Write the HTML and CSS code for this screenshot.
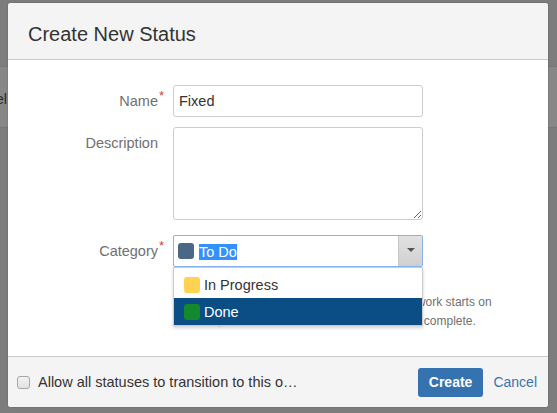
FILE: index.html
```html
<!DOCTYPE html>
<html lang="en">
<head>
<meta charset="utf-8">
<title>Create New Status</title>
<link rel="stylesheet" href="styles.css">
</head>
<body>
<div class="under"><span class="under-text">Label</span></div>
<div class="dialog">
  <header class="dlg-head"><h2 class="dlg-title">Create New Status</h2></header>
  <div class="dlg-body">
    <div class="row">
      <label class="lbl">Name<span class="req">*</span></label>
      <div class="field"><input class="text" type="text" value="Fixed"></div>
    </div>
    <div class="row row-desc">
      <label class="lbl">Description</label>
      <div class="field"><textarea class="textarea"></textarea></div>
    </div>
    <div class="row">
      <label class="lbl">Category<span class="req">*</span></label>
      <div class="field">
        <div class="select">
          <span class="swatch todo"></span>
          <span class="sel-text">To Do</span>
          <span class="arrow"><span class="tri"></span></span>
          <ul class="menu">
            <li class="opt"><span class="swatch prog"></span><span>In Progress</span></li>
            <li class="opt active"><span class="swatch done"></span><span>Done</span></li>
          </ul>
        </div>
        <div class="help">
          <div class="help-line">Use To Do for open issues, In Progress when work starts on</div>
          <div class="help-line">an issue, and use Done when all of the work is complete.</div>
        </div>
      </div>
    </div>
  </div>
  <footer class="dlg-foot">
    <label class="check"><input class="cb" type="checkbox"><span class="check-text">Allow all statuses to transition to this one</span></label>
    <div class="actions">
      <button class="btn" type="button">Create</button>
      <a class="cancel" href="#">Cancel</a>
    </div>
  </footer>
</div>
</body>
</html>
```

FILE: styles.css
```css
html, body {
  margin: 0;
  padding: 0;
}
body {
  background: #7d7d7d;
  font-family: "Liberation Sans", Arial, sans-serif;
  width: 557px;
  height: 413px;
  overflow: hidden;
  position: relative;
}
.under {
  position: absolute;
  top: 66px;
  left: 0;
  width: 557px;
  height: 62px;
  background: #878787;
  border-top: 1px solid #767676;
  border-bottom: 1px solid #767676;
  box-sizing: border-box;
}
.under-text {
  position: absolute;
  right: 550px;
  top: 24px;
  font-size: 14.5px;
  color: #2a2a2a;
}
.dialog {
  position: relative;
  z-index: 1;
  margin: 3px 0 0 8px;
  width: 540px;
  height: 404px;
  background: #fff;
  border-radius: 3px;
  display: flex;
  flex-direction: column;
  box-shadow: 0 0 2px rgba(0,0,0,0.25);
}
.dlg-head {
  background: #f4f4f4;
  border-bottom: 1px solid #cccccc;
  padding: 16px 20px 10px;
  border-radius: 3px 3px 0 0;
}
.dlg-title {
  margin: 0;
  font-size: 20px;
  font-weight: normal;
  line-height: 30px;
  color: #333;
}
.dlg-body {
  flex: 1;
  padding-top: 25px;
}
.row {
  display: grid;
  grid-template-columns: 150px 250px;
  column-gap: 15px;
  margin-bottom: 9px;
}
.row-desc {
  margin-bottom: 15px;
}
.lbl {
  text-align: right;
  line-height: 32px;
  font-size: 14.5px;
  color: #707070;
}
.req {
  display: inline-block;
  width: 7px;
  margin-right: -7px;
  text-align: left;
  color: #d04437;
  font-size: 13px;
  position: relative;
  top: -6px;
  left: 1px;
}
.field {
  position: relative;
}
.text {
  box-sizing: border-box;
  width: 250px;
  height: 32px;
  border: 1px solid #cccccc;
  border-radius: 3px;
  padding: 0 5px;
  margin: 0;
  font-family: inherit;
  font-size: 14.5px;
  color: #333;
  display: block;
}
.textarea {
  box-sizing: border-box;
  width: 250px;
  height: 93px;
  border: 1px solid #cccccc;
  border-radius: 3px;
  margin: 0;
  padding: 4px 5px;
  display: block;
  font-family: inherit;
  font-size: 14.5px;
}
.select {
  position: relative;
  box-sizing: border-box;
  width: 250px;
  height: 32px;
  border: 1px solid #88b2ef;
  border-radius: 2px;
  display: flex;
  align-items: center;
  padding-left: 4px;
  background: #fff;
}
.swatch {
  display: inline-block;
  width: 16px;
  height: 16px;
  border-radius: 3px;
  flex: none;
}
.todo { background: #4a6785; }
.prog { background: #ffd351; }
.done { background: #14892c; }
.sel-text {
  margin-left: 5px;
  background: #3390ff;
  color: #fff;
  font-size: 14.5px;
  line-height: 16px;
  margin-top: 1px;
}
.arrow {
  margin-left: auto;
  width: 23px;
  height: 30px;
  border-left: 1px solid #c6c6c6;
  background: linear-gradient(#e2e2e2, #d0d0d0);
  display: flex;
  align-items: center;
  justify-content: center;
}
.tri {
  width: 0;
  height: 0;
  border-left: 4px solid transparent;
  border-right: 4px solid transparent;
  border-top: 4px solid #555;
  margin-top: -3px;
}
.menu {
  position: absolute;
  top: calc(100% + 1px);
  left: -1px;
  right: -1px;
  margin: 0;
  padding: 3px 0 0;
  list-style: none;
  background: #fff;
  border: 1px solid #cccccc;
  box-shadow: 0 2px 3px rgba(0,0,0,0.18);
  z-index: 2;
}
.opt {
  height: 27px;
  display: flex;
  align-items: center;
  gap: 4px;
  padding-left: 10px;
  font-size: 14.5px;
  color: #333;
}
.opt.active {
  background: #0b4e86;
  color: #fff;
}
.help {
  margin-top: 26px;
  font-size: 12px;
  line-height: 19px;
  color: #707070;
  white-space: nowrap;
}
.dlg-foot {
  box-sizing: border-box;
  height: 51px;
  border-top: 1px solid #cccccc;
  background: #f4f4f4;
  display: flex;
  align-items: center;
  padding: 0 11px 0 9px;
  border-radius: 0 0 3px 3px;
}
.check {
  display: flex;
  align-items: center;
  gap: 8px;
}
.cb {
  appearance: none;
  -webkit-appearance: none;
  width: 13px;
  height: 13px;
  margin: 0;
  border: 1px solid #a6a6a6;
  border-radius: 3px;
  background: linear-gradient(#f2f2f2, #e2e2e2);
  box-sizing: border-box;
  flex: none;
}
.check-text {
  max-width: 261px;
  overflow: hidden;
  text-overflow: ellipsis;
  white-space: nowrap;
  font-size: 14.5px;
  color: #333;
}
.actions {
  margin-left: auto;
  display: flex;
  align-items: center;
  gap: 10px;
}
.btn {
  height: 29px;
  padding: 0 11px;
  border: none;
  border-radius: 3px;
  background: #3572b0;
  color: #fff;
  font-family: inherit;
  font-size: 14px;
  font-weight: bold;
}
.cancel {
  color: #3b73af;
  font-size: 14px;
  text-decoration: none;
}
```
